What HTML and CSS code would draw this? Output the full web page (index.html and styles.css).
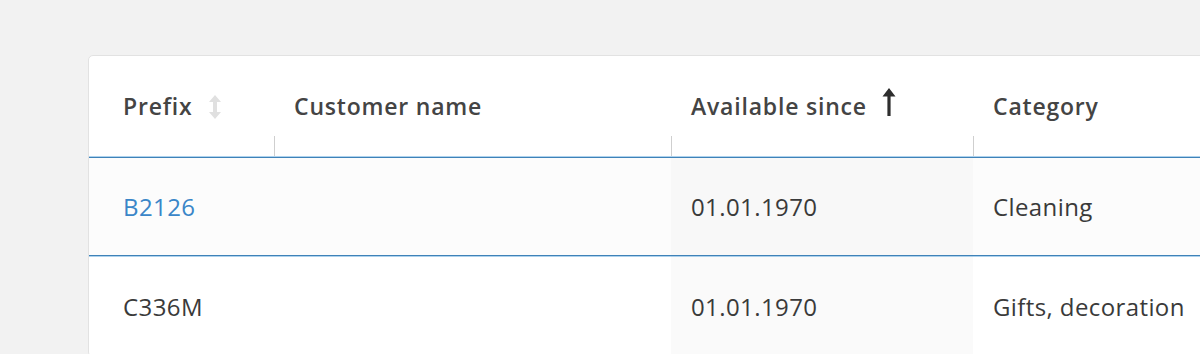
FILE: index.html
```html
<!DOCTYPE html>
<html lang="en">
<head>
<meta charset="utf-8">
<title>Prefixes</title>
<link rel="stylesheet" href="styles.css">
</head>
<body>
<main class="page">
  <section class="card">
    <div class="row head">
      <div class="cell c-prefix">
        <span>Prefix</span>
        <svg class="sort-icon idle" width="16" height="26" viewBox="0 0 16 26" aria-hidden="true">
          <path d="M8 1 L2 8 H6 V18 H2 L8 25 L14 18 H10 V8 H14 Z" fill="currentColor"/>
        </svg>
      </div>
      <div class="cell c-name sep"><span>Customer name</span></div>
      <div class="cell c-since sep">
        <span>Available since</span>
        <svg class="sort-icon active" width="16" height="30" viewBox="0 0 16 30" aria-hidden="true">
          <path d="M8 1 L1.5 9.5 H6.4 V29 H9.6 V9.5 H14.5 Z" fill="currentColor"/>
        </svg>
      </div>
      <div class="cell c-cat sep"><span>Category</span></div>
    </div>

    <div class="row body selected">
      <div class="cell c-prefix"><a class="link" href="#">B2126</a></div>
      <div class="cell c-name"></div>
      <div class="cell c-since">01.01.1970</div>
      <div class="cell c-cat">Cleaning</div>
    </div>

    <div class="row body">
      <div class="cell c-prefix">C336M</div>
      <div class="cell c-name"></div>
      <div class="cell c-since">01.01.1970</div>
      <div class="cell c-cat">Gifts, decoration</div>
    </div>
  </section>
</main>
</body>
</html>
```

FILE: styles.css
```css
html, body {
  margin: 0;
  height: 100%;
  overflow: hidden;
  background: #f2f2f2;
}

body {
  font-family: "Open Sans", "Noto Sans", sans-serif;
  color: #333;
}

.page {
  padding: 55px 0 0 88px;
}

.card {
  width: 1300px;
  background: #fff;
  border: 1px solid #e2e2e2;
  border-radius: 5px;
  overflow: hidden;
}

.row {
  display: flex;
  position: relative;
}

.cell {
  display: flex;
  align-items: center;
  gap: 14px;
  box-sizing: border-box;
  padding-left: 20px;
  white-space: nowrap;
}

.c-prefix { width: 185px; padding-left: 34px; }
.c-name   { width: 397px; }
.c-since  { width: 302px; }
.c-cat    { flex: 1; }

/* header */
.head {
  height: 101px;
  font-size: 23px;
  font-weight: 600;
  color: #444;
  letter-spacing: 0.8px;
}

.head .cell {
  padding-bottom: 2px;
}

.sep {
  position: relative;
}

.sep::before {
  content: "";
  position: absolute;
  left: 0;
  bottom: 1px;
  width: 1px;
  height: 20px;
  background: #cfcfcf;
}

.sort-icon.idle {
  color: #e0e0e0;
  margin-left: 0;
  margin-top: 2px;
}

.sort-icon.active {
  color: #2e2e2e;
  margin-top: -8px;
  margin-left: 0;
}

/* body rows */
.body {
  height: 100px;
  font-size: 24px;
  color: #3a3a3a;
  letter-spacing: 0.4px;
}

.body .c-since {
  background: #fafafa;
}

.selected {
  height: 99px;
  box-sizing: border-box;
  background: #fcfcfc;
  border: 1px solid #3f82b8;
  box-shadow: 0 0 0 1px rgba(120, 180, 225, 0.6);
  margin-left: -1px;
  z-index: 1;
}

.selected .c-since {
  background: #f8f8f8;
}

.link {
  color: #3a86c8;
  text-decoration: none;
}
```
